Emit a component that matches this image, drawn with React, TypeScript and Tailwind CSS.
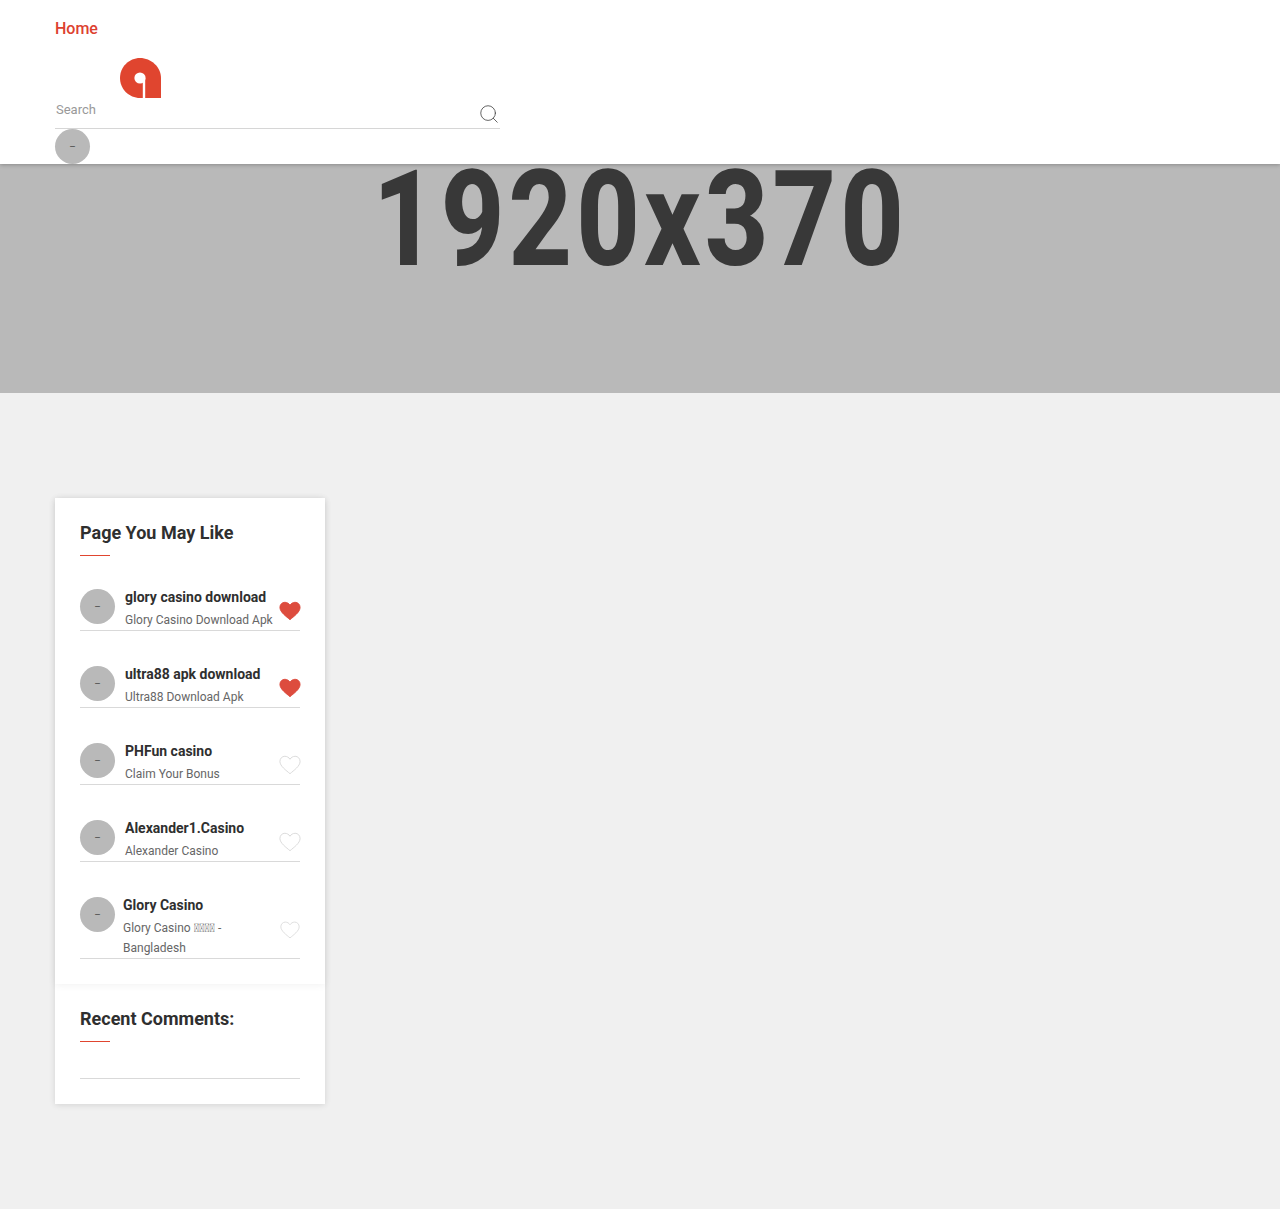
import { Search } from 'lucide-react'

// sidebar rows, same order as the page
const items = [
  { name: 'glory casino download', sub: 'Glory Casino Download Apk', liked: true },
  { name: 'ultra88 apk download', sub: 'Ultra88 Download Apk', liked: true },
  { name: 'PHFun casino', sub: 'Claim Your Bonus', liked: false },
  { name: 'Alexander1.Casino', sub: 'Alexander Casino', liked: false },
  { name: 'Glory Casino', sub: 'Glory Casino \u{E000}\u{E001}\u{E002}\u{E003} - Bangladesh', liked: false, narrow: true },
]

function Avatar() {
  return (
    <div className="flex h-[35px] w-[35px] shrink-0 items-center justify-center rounded-full bg-[#b9b9b9] text-[10px] leading-none text-[#555]">
      –
    </div>
  )
}

function Heart({ filled, small }: { filled: boolean; small?: boolean }) {
  return (
    <svg viewBox="0 0 24 21" className={small ? 'h-[18px] w-[20px]' : 'h-[20px] w-[22px]'}>
      <path
        d="M12 20C8 16.5 1 11.8 1 6.6 1 3.4 3.4 1 6.4 1 8.6 1 10.8 2.2 12 4.2 13.2 2.2 15.4 1 17.6 1 20.6 1 23 3.4 23 6.6 23 11.8 16 16.5 12 20Z"
        fill={filled ? '#dd4c3e' : 'none'}
        stroke={filled ? '#dd4c3e' : '#d8d8d8'}
        strokeWidth="1"
      />
    </svg>
  )
}

function Logo() {
  return (
    <svg viewBox="0 0 41 40" className="ml-[65px] mt-[18px] block h-[40px] w-[41px]">
      <path d="M20 0C31 0 41 9 41 20V40H20C9 40 0 31 0 20 0 9 9 0 20 0Z" fill="#e0452f" />
      <circle cx="20" cy="20" r="5.6" fill="#fff" />
      <rect x="22.8" y="20" width="2.4" height="20" fill="#fff" />
    </svg>
  )
}

function SideTitle({ children }: { children: string }) {
  return (
    <div>
      <h3 className="text-[18px] font-bold leading-[20px] text-[#2f2f2f]">{children}</h3>
      <div className="mt-[12px] h-px w-[30px] bg-[#e0452f]" />
    </div>
  )
}

export default function App() {
  return (
    <div className="min-h-[1209px] bg-[#f0f0f0] font-['Roboto',sans-serif]">
      <header className="relative z-10 h-[164px] bg-white pl-[55px] pt-[18px] shadow-[0_1px_4px_rgba(0,0,0,0.25)]">
        <a className="block h-[22px] text-[16px] font-medium leading-[22px] text-[#dd4130]">Home</a>
        <Logo />
        <div className="flex h-[31px] w-[445px] items-start justify-between border-b border-[#d6d6d6]">
          <input
            placeholder="Search"
            className="ml-px mt-[2px] h-[20px] w-[300px] text-[13px] leading-[20px] outline-none placeholder:text-[#999]"
          />
          <Search className="mt-[5px] h-[22px] w-[22px]" strokeWidth={0.9} color="#444" />
        </div>
        <Avatar />
      </header>

      {/* placeholder banner, the digits sit right under the header */}
      <div className="flex h-[229px] justify-center bg-[#b9b9b9]">
        <div className="h-[112px] scale-x-[0.83] whitespace-nowrap text-[133px] font-extrabold leading-[112px] tracking-[5px] text-[#383838]">
          1920x370
        </div>
      </div>

      <aside className="ml-[55px] mt-[105px] w-[270px] bg-white shadow-[0_1px_6px_rgba(0,0,0,0.12)]">
        <section className="p-[25px] shadow-[0_1px_8px_rgba(0,0,0,0.06)]">
          <SideTitle>Page You May Like</SideTitle>
          <ul className="mt-[31px] flex flex-col gap-[33px]">
            {items.map((it) => (
              <li key={it.name} className="flex items-start border-b border-[#d9d9d9]">
                <div className="mt-[2px]">
                  <Avatar />
                </div>
                <div className={`min-w-0 flex-1 ${it.narrow ? 'ml-[8px] mr-[55px]' : 'ml-[10px]'}`}>
                  <div className="text-[14px] font-bold leading-[20px] text-[#2f2f2f]">{it.name}</div>
                  <div className="mt-[3px] text-[12px] leading-[20px] text-[#666]">{it.sub}</div>
                </div>
                <div className={`shrink-0 self-center ${it.narrow ? 'ml-[-35px] mt-[7px]' : '-mr-px mt-[4px]'}`}>
                  <Heart filled={it.liked} small={it.narrow} />
                </div>
              </li>
            ))}
          </ul>
        </section>
        <section className="p-[25px]">
          <SideTitle>Recent Comments:</SideTitle>
          <div className="mt-[36px] border-b border-[#d9d9d9]" />
        </section>
      </aside>
    </div>
  )
}
